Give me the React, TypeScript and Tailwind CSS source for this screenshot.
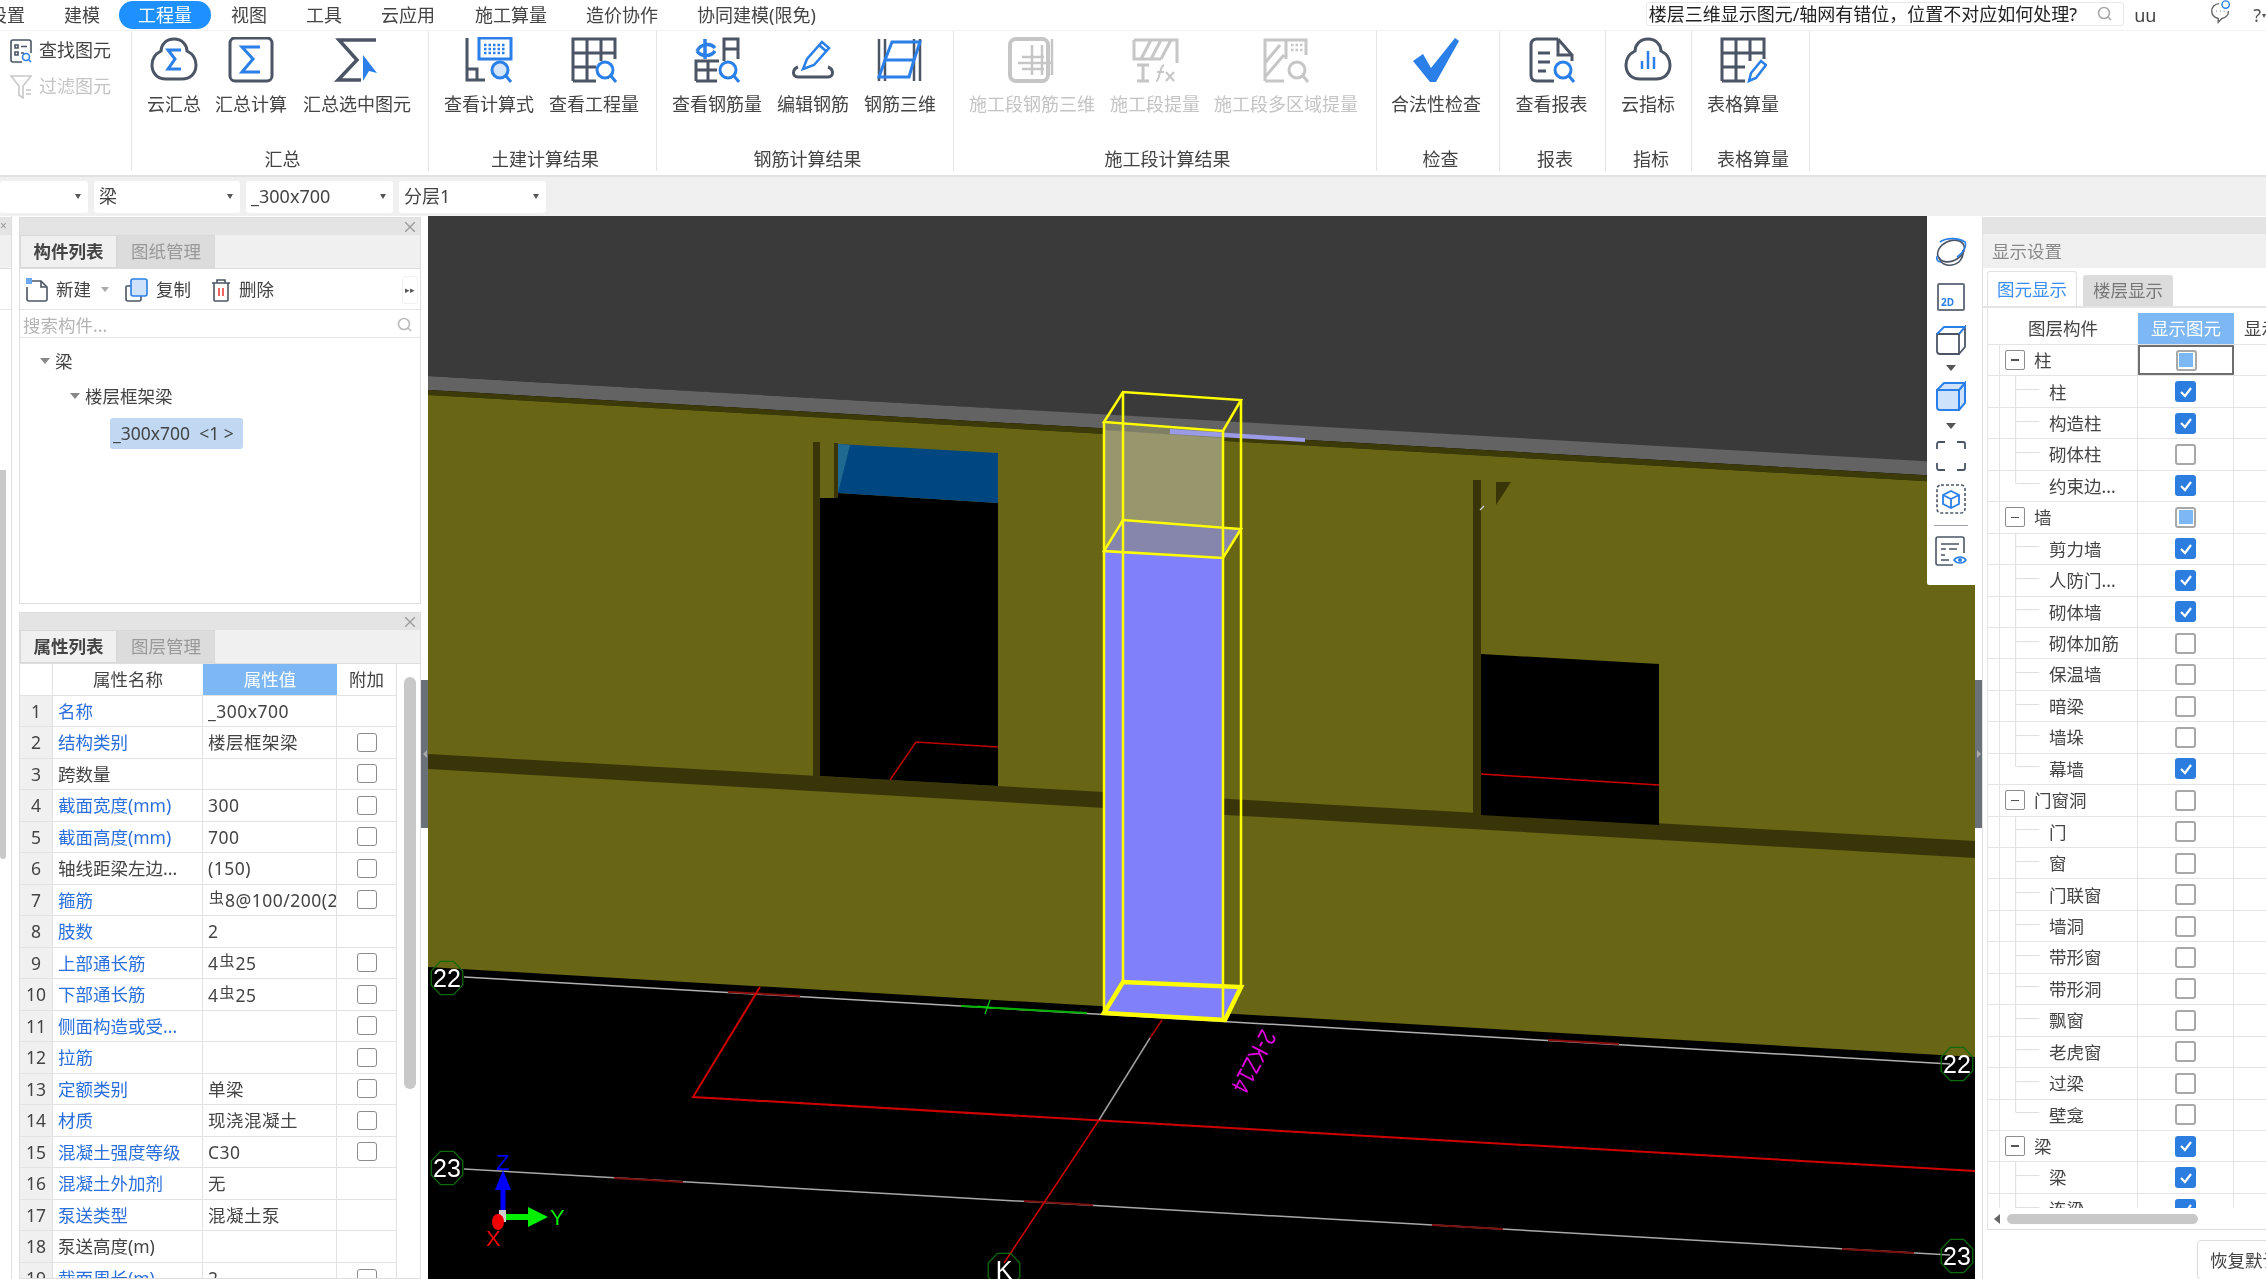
import React from "react";

const G = "#4b5565";
const B = "#2a7fe8";
const L = "#c6c6c6";

function Ic({ children, w = "w-[48px]" }: { children: React.ReactNode; w?: string }) {
  return (
    <svg viewBox="0 0 48 46" className={`${w} h-[46px]`} fill="none" stroke={G} strokeWidth="2.5">
      {children}
    </svg>
  );
}

const Mag = ({ c = B, fill = "none" }: { c?: string; fill?: string }) => (
  <g stroke={c} strokeWidth="3">
    <circle cx="35" cy="33" r="8" fill={fill} />
    <path d="M41 39l5 6" />
  </g>
);

const icons: Record<string, React.ReactNode> = {
  cloudSum: (
    <Ic>
      <path d="M24 2C16 2 11 8 11 14C5 17 2 22 2 28C2 37 8 42 16 42H32C40 42 46 37 46 28C46 22 43 17 37 14C37 8 32 2 24 2Z" strokeWidth="3" />
      <path d="M31 13H18L25 22L18 32H31" stroke={B} strokeWidth="3" />
    </Ic>
  ),
  sum: (
    <Ic>
      <rect x="3" y="1" width="42" height="43" rx="5" strokeWidth="3" />
      <path d="M33 10H15L26 22L15 35H33" stroke={B} strokeWidth="3" />
    </Ic>
  ),
  sumSel: (
    <Ic>
      <path d="M43 3H6L24 23L5 43H28" strokeWidth="3.5" />
      <path d="M30 18L44 36L36 34L30 44Z" fill={B} stroke="none" />
    </Ic>
  ),
  calc: (
    <Ic>
      <path d="M2 1V43H20M2 32H12V43" strokeWidth="3" />
      <rect x="14" y="1" width="32" height="21" stroke={B} strokeWidth="3" />
      <path d="M19 8H41M19 12H41M19 16H41" stroke={B} strokeWidth="2.5" strokeDasharray="2.5 2" />
      <Mag fill="#d4e6fb" />
    </Ic>
  ),
  qty: (
    <Ic>
      <path d="M3 44V2H45V22M17 2V44M31 2V24M3 16H45M3 30H26M3 44H26" strokeWidth="3" />
      <Mag fill="#fff" />
    </Ic>
  ),
  rebarQ: (
    <Ic>
      <path d="M3 44V24H26M3 33H24M3 44H24M15 24V44M31 24V2H45V22M31 12H45" strokeWidth="3" />
      <path d="M4 14C8 6 18 6 22 11M4 14C8 20 18 20 22 14M12 2V22" stroke={B} strokeWidth="3.5" />
      <Mag fill="#fff" />
    </Ic>
  ),
  edit: (
    <Ic>
      <path d="M9 30C3 32 3 40 9 40H39C45 40 45 32 39 30" strokeWidth="3" />
      <path d="M14 32L18 22L33 5L40 11L25 28Z" stroke={B} />
      <path d="M30 8L37 14" stroke={B} />
    </Ic>
  ),
  rebar3d: (
    <Ic>
      <path d="M3 2V44M9 2V44M38 2V44M44 2V44" strokeWidth="2.5" />
      <path d="M9 23L16 5H44L38 23ZM9 23H38L33 40H3Z" stroke={B} strokeWidth="3" />
    </Ic>
  ),
  seg3d: (
    <Ic>
      <rect x="2" y="2" width="38" height="42" rx="6" stroke={L} strokeWidth="4" />
      <path d="M10 26H44M14 20H36M14 32H36M24 8V38M34 8V38M44 2V38" stroke={L} strokeWidth="2.5" />
    </Ic>
  ),
  segQ: (
    <Ic>
      <path d="M3 3H46V26M3 3V22H30M10 22L20 3M20 22L30 3M30 22L40 3M6 28H18M12 28V44M6 44H18" stroke={L} strokeWidth="3" />
      <path d="M25 44C29 44 28 30 33 28M26 35H33M35 35L43 44M43 35L35 44" stroke={L} strokeWidth="2" />
    </Ic>
  ),
  segMulti: (
    <Ic>
      <path d="M3 44V3H44V18M3 44H22M3 26L18 8M3 40L22 18M24 3V22" stroke={L} strokeWidth="3" />
      <path d="M29 8H41M29 13H41" stroke={L} strokeWidth="2.5" strokeDasharray="2.5 2" />
      <Mag c={L} />
    </Ic>
  ),
  check: (
    <Ic>
      <path d="M1 24L11 17L19 31L43 1L47 4L24 45H18Z" fill={B} stroke="none" />
    </Ic>
  ),
  report: (
    <Ic>
      <path d="M30 2H9C5 2 3 4 3 8V38C3 42 5 44 9 44H26M30 2L44 18V24M30 2V18H44" strokeWidth="3" />
      <path d="M10 16H22M10 25H22M10 34H18" strokeWidth="3" />
      <Mag fill="#fff" />
    </Ic>
  ),
  cloudBar: (
    <Ic>
      <path d="M24 2C16 2 11 8 11 14C5 17 2 22 2 28C2 37 8 42 16 42H32C40 42 46 37 46 28C46 22 43 17 37 14C37 8 32 2 24 2Z" strokeWidth="3" />
      <path d="M18 24V32M24 14V32M30 20V32" stroke={B} strokeWidth="2.5" />
    </Ic>
  ),
  tablePen: (
    <Ic>
      <path d="M3 44V2H45V22M17 2V44M31 2V24M3 16H45M3 30H26M3 44H26" strokeWidth="3" />
      <path d="M30 44L32 36L42 24L47 28L37 41Z" stroke={B} />
    </Ic>
  ),
};

type Item = { label: string; icon: string; w: string; off?: boolean };
type Group = { name: string; w: string; row?: string; items: Item[] };

const groups: Group[] = [
  {
    name: "汇总",
    w: "w-[297px]",
    row: "pl-[12px]",
    items: [
      { label: "云汇总", icon: "cloudSum", w: "w-[60px]" },
      { label: "汇总计算", icon: "sum", w: "w-[94px]" },
      { label: "汇总选中图元", icon: "sumSel", w: "w-[118px]" },
    ],
  },
  {
    name: "土建计算结果",
    w: "w-[228px]",
    items: [
      { label: "查看计算式", icon: "calc", w: "w-[120px]" },
      { label: "查看工程量", icon: "qty", w: "w-[90px]" },
    ],
  },
  {
    name: "钢筋计算结果",
    w: "w-[297px]",
    items: [
      { label: "查看钢筋量", icon: "rebarQ", w: "w-[120px]" },
      { label: "编辑钢筋", icon: "edit", w: "w-[72px]" },
      { label: "钢筋三维", icon: "rebar3d", w: "w-[102px]" },
    ],
  },
  {
    name: "施工段计算结果",
    w: "w-[423px]",
    items: [
      { label: "施工段钢筋三维", icon: "seg3d", w: "w-[156px]", off: true },
      { label: "施工段提量", icon: "segQ", w: "w-[90px]", off: true },
      { label: "施工段多区域提量", icon: "segMulti", w: "w-[172px]", off: true },
    ],
  },
  { name: "检查", w: "w-[123px]", items: [{ label: "合法性检查", icon: "check", w: "w-[118px]" }] },
  { name: "报表", w: "w-[106px]", items: [{ label: "查看报表", icon: "report", w: "w-[103px]" }] },
  { name: "指标", w: "w-[86px]", items: [{ label: "云指标", icon: "cloudBar", w: "w-[84px]" }] },
  { name: "表格算量", w: "w-[118px]", items: [{ label: "表格算量", icon: "tablePen", w: "w-[102px]" }] },
];

function Menu() {
  return (
    <div className="h-[30px] flex items-center bg-white text-[18px] text-[#444] shrink-0">
      <div className="w-[25px] overflow-hidden flex justify-end whitespace-nowrap"><span>设置</span></div>
      <span className="ml-[39px] w-[55px] whitespace-nowrap">建模</span>
      <span className="w-[92px] h-[28px] rounded-[14px] bg-[#1e90ff] text-white flex items-center justify-center">工程量</span>
      <span className="ml-[20px] w-[75px]">视图</span>
      <span className="w-[75px]">工具</span>
      <span className="w-[94px]">云应用</span>
      <span className="w-[111px]">施工算量</span>
      <span className="w-[111px]">造价协作</span>
      <span className="whitespace-nowrap">协同建模(限免)</span>
      <div className="flex-1" />
      <div className="w-[478px] h-[24px] mt-[-2px] border border-[#e8e8e8] rounded-[3px] flex items-center overflow-hidden relative">
        <div className="w-[430px] overflow-hidden flex justify-end whitespace-nowrap text-[#222] shrink-0">
          <span>楼层三维显示图元/轴网有错位，位置不对应如何处理?</span>
        </div>
        <svg viewBox="0 0 16 16" className="w-[16px] h-[16px] ml-[20px]" fill="none" stroke="#aaa" strokeWidth="1.6">
          <circle cx="7" cy="7" r="5.5" />
          <path d="M11 11l3 3" />
        </svg>
      </div>
      <span className="ml-[10px] w-[77px] text-[#444]">uu</span>
      <svg viewBox="0 0 24 28" className="w-[24px] h-[26px] -ml-[2px] mt-[-6px]" fill="none" stroke="#666" strokeWidth="1.5">
        <path d="M10 5C5 5 2 9 2 13C2 17 5 20 9 21L9 25L13 21C18 20 20 17 20 13" />
        <circle cx="17" cy="6" r="4" stroke="#2a7fe8" />
        <path d="M7 13h.5M11 13h.5M15 13h.5" strokeWidth="2" />
      </svg>
      <span className="ml-[20px] text-[#555] whitespace-nowrap">?</span>
      <span className="ml-[1px] text-[8px] text-[#555]">▾</span>
    </div>
  );
}

function Ribbon() {
  return (
    <div className="h-[147px] shrink-0 bg-white flex border-b-2 border-[#e2e2e2] border-t border-t-[#f2f2f2]">
      <div className="w-[132px] h-[139px] border-r border-[#e4e4e4] pl-[10px] pt-[6px] flex flex-col gap-[9px]">
        <div className="flex items-center gap-[7px] text-[18px] text-[#444]">
          <svg viewBox="0 0 22 24" className="w-[22px] h-[24px]" fill="none" stroke={G} strokeWidth="1.6">
            <path d="M12 23H3C2 23 1 22 1 21V3C1 2 2 1 3 1H19C20 1 21 2 21 3V14" />
            <path d="M5 6H8V9H5ZM5 13H8V16H5ZM11 7.5H17M11 14H14" />
            <circle cx="16" cy="18" r="3.5" stroke={B} />
            <path d="M19 21l2 2" stroke={B} />
          </svg>
          <span className="whitespace-nowrap">查找图元</span>
        </div>
        <div className="flex items-center gap-[7px] text-[18px] text-[#c4c4c4]">
          <svg viewBox="0 0 22 24" className="w-[22px] h-[24px]" fill="none" stroke="#c8c8c8" strokeWidth="1.6">
            <path d="M1 1H21L13 11V23L9 20V11ZM16 15H21M16 19H21" />
          </svg>
          <span className="whitespace-nowrap">过滤图元</span>
        </div>
      </div>
      {groups.map((g) => (
        <div key={g.name} className={`${g.w} h-[140px] border-r border-[#e4e4e4] flex flex-col justify-between box-border shrink-0`}>
          <div className={`flex pt-[6px] ${g.row ?? ""}`}>
            {g.items.map((it) => (
              <div key={it.label} className={`${it.w} flex flex-col items-center shrink-0`}>
                {icons[it.icon]}
                <span className={`mt-[9px] text-[18px] leading-[24px] whitespace-nowrap ${it.off ? "text-[#c4c4c4]" : "text-[#444]"}`}>
                  {it.label}
                </span>
              </div>
            ))}
          </div>
          <div className="pl-[5px] text-center text-[18px] leading-[24px] text-[#444] whitespace-nowrap">{g.name}</div>
        </div>
      ))}
    </div>
  );
}

function Select({ text, w }: { text: string; w: string }) {
  return (
    <div className={`${w} h-[32px] bg-white rounded-[3px] flex items-center justify-between pl-[5px] pr-[7px] text-[18px] text-[#444] shrink-0`}>
      <span>{text}</span>
      <span className="w-0 h-0 border-x-[3px] border-x-transparent border-t-[5px] border-t-[#555]" />
    </div>
  );
}

function SelectBar() {
  return (
    <div className="h-[39px] shrink-0 bg-[#f0f0f0] flex items-center gap-[6px]">
      <Select text="" w="w-[88px]" />
      <Select text="梁" w="w-[146px]" />
      <Select text="_300x700" w="w-[147px]" />
      <Select text="分层1" w="w-[147px]" />
    </div>
  );
}

const X = () => (
  <svg viewBox="0 0 10 10" className="w-[10px] h-[10px]" stroke="#999" strokeWidth="1.3">
    <path d="M0 0L10 10M10 0L0 10" />
  </svg>
);

function PanelHead({ a, b }: { a: string; b: string }) {
  return (
    <>
      <div className="h-[17px] bg-[#e4e4e4] flex items-center justify-end pr-[5px] shrink-0">
        <X />
      </div>
      <div className="h-[34px] bg-[#f0f0f0] flex text-[17.5px] shrink-0 border-b border-[#dedede]">
        <div className="w-[97px] flex items-center justify-center font-bold text-[#444] border border-[#d8d8d8]">{a}</div>
        <div className="w-[98px] flex items-center justify-center text-[#999] bg-[#dcdcdc] border border-[#d8d8d8]">{b}</div>
      </div>
    </>
  );
}

const props: [string, string, boolean, boolean][] = [
  ["名称", "_300x700", true, false],
  ["结构类别", "楼层框架梁", true, true],
  ["跨数量", "", false, true],
  ["截面宽度(mm)", "300", true, true],
  ["截面高度(mm)", "700", true, true],
  ["轴线距梁左边...", "(150)", false, true],
  ["箍筋", "~8@100/200(2)", true, true],
  ["肢数", "2", true, false],
  ["上部通长筋", "4~25", true, true],
  ["下部通长筋", "4~25", true, true],
  ["侧面构造或受...", "", true, true],
  ["拉筋", "", true, true],
  ["定额类别", "单梁", true, true],
  ["材质", "现浇混凝土", true, true],
  ["混凝土强度等级", "C30", true, true],
  ["混凝土外加剂", "无", true, false],
  ["泵送类型", "混凝土泵", true, false],
  ["泵送高度(m)", "", false, false],
  ["截面周长(m)", "2", true, true],
];

function Val({ v }: { v: string }) {
  if (!v.includes("~")) return <>{v}</>;
  const [l, r] = v.split("~");
  return (
    <>
      {l}
      <span className="text-[15px] align-[4px] mx-[1px] tracking-normal">虫</span>
      {r}
    </>
  );
}

function LeftPanels() {
  return (
    <div className="w-[402px] shrink-0 flex flex-col gap-[8px] pt-[1px]">
      <div className="h-[387px] border border-[#dedede] flex flex-col bg-white shrink-0">
        <PanelHead a="构件列表" b="图纸管理" />
        <div className="h-[41px] pt-[1px] flex items-center pl-[6px] text-[17.5px] text-[#444] border-b border-[#e4e4e4] shrink-0">
          <svg viewBox="0 0 22 24" className="w-[22px] h-[24px]" fill="none" stroke={G} strokeWidth="1.6">
            <path d="M6 3H15L21 9V21C21 22 20 23 19 23H3C2 23 1 22 1 21V9" />
            <path d="M15 3V9H21" />
            <rect x="0" y="0" width="6" height="6" fill="#6aa8f0" stroke="none" />
          </svg>
          <span className="ml-[8px]">新建</span>
          <span className="ml-[10px] w-0 h-0 border-x-[4px] border-x-transparent border-t-[5px] border-t-[#aaa]" />
          <svg viewBox="0 0 23 24" className="w-[23px] h-[24px] ml-[16px]" fill="none" stroke={G} strokeWidth="1.6">
            <path d="M6 8H2C1 8 1 9 1 9V21C1 22 2 23 3 23H14C15 23 16 22 16 21V18" />
            <rect x="6" y="1" width="16" height="17" rx="2" fill="#cfe2fb" stroke={B} />
          </svg>
          <span className="ml-[8px]">复制</span>
          <svg viewBox="0 0 20 24" className="w-[20px] h-[24px] ml-[20px]" fill="none" stroke={G} strokeWidth="1.6">
            <path d="M1 5H19M6 5V2H14V5M3 5V22C3 23 3 23 4 23H16C17 23 17 23 17 22V5" />
            <path d="M8 10V18M12 10V18" stroke="#e8433a" />
          </svg>
          <span className="ml-[8px]">删除</span>
          <div className="flex-1" />
          <div className="w-[16px] h-[28px] rounded-[3px] border border-[#f0f0f0] flex items-center justify-center text-[9px] text-[#555] mr-[2px]">▸▸</div>
        </div>
        <div className="h-[28px] pt-[3px] flex items-center justify-between pl-[3px] pr-[7px] text-[17.5px] text-[#b5b5b5] border-b border-[#e4e4e4] shrink-0">
          <span>搜索构件...</span>
          <svg viewBox="0 0 16 16" className="w-[16px] h-[16px]" fill="none" stroke="#bbb" strokeWidth="1.6">
            <circle cx="7" cy="7" r="5.5" />
            <path d="M11 11l3 3" />
          </svg>
        </div>
        <div className="flex-1 flex flex-col text-[17.5px] text-[#444]">
          <div className="h-[34px] mt-[6px] flex items-center pl-[20px]">
            <span className="w-0 h-0 border-x-[5px] border-x-transparent border-t-[6px] border-t-[#888]" />
            <span className="ml-[5px]">梁</span>
          </div>
          <div className="h-[36px] flex items-center pl-[50px]">
            <span className="w-0 h-0 border-x-[5px] border-x-transparent border-t-[6px] border-t-[#888]" />
            <span className="ml-[5px]">楼层框架梁</span>
          </div>
          <div className="ml-[90px] mt-[4px] w-[133px] h-[31px] bg-[#c0d8f2] rounded-[3px] flex items-center pl-[3px] whitespace-pre">_300x700  &lt;1 &gt;</div>
        </div>
      </div>
      <div className="flex-1 border border-[#dedede] flex flex-col bg-white overflow-hidden">
        <PanelHead a="属性列表" b="图层管理" />
        <div className="relative flex-1 overflow-hidden text-[17.5px] text-[#444]">
          <div className="h-[30.5px] flex items-stretch">
            <div className="w-[33px] border-r border-[#e2e2e2]" />
            <div className="w-[150px] flex items-center justify-center">属性名称</div>
            <div className="w-[134px] flex items-center justify-center bg-[#7db7f4] text-white">属性值</div>
            <div className="w-[60px] flex items-center justify-center border-r border-[#e2e2e2]">附加</div>
          </div>
          {props.map(([n, v, blue, cb], i) => (
            <div key={n} className="h-[31.52px] flex items-stretch border-t border-[#e2e2e2] w-[377px]">
              <div className="w-[33px] bg-[#f0f0f0] border-r border-[#e2e2e2] flex items-center justify-center shrink-0">{i + 1}</div>
              <div className={`w-[150px] pl-[5px] border-r border-[#e2e2e2] flex items-center whitespace-nowrap shrink-0 ${blue ? "text-[#2b6fdc]" : ""}`}>{n}</div>
              <div className="w-[134px] pl-[5px] border-r border-[#e2e2e2] overflow-hidden whitespace-nowrap flex items-center shrink-0 tracking-[0.5px]">
                <span><Val v={v} /></span>
              </div>
              <div className="w-[60px] border-r border-[#e2e2e2] flex items-center justify-center shrink-0">
                {cb && <span className="w-[20px] h-[19px] rounded-[3px] border border-[#8c8c8c] bg-white" />}
              </div>
            </div>
          ))}
          <div className="absolute left-[384px] top-[13px] w-[12px] h-[412px] rounded-[6px] bg-[#c8c8c8]" />
        </div>
      </div>
    </div>
  );
}

function Hex({ x, y, t }: { x: number; y: number; t: string }) {
  const r = 18;
  const pts = Array.from({ length: 8 }, (_, i) => {
    const a = (Math.PI / 4) * i + Math.PI / 8;
    return `${x + r * 0.95 * Math.cos(a)},${y + r * Math.sin(a)}`;
  }).join(" ");
  return (
    <g>
      <polygon points={pts} fill="none" stroke="#0d6b0d" strokeWidth="1.3" />
      <text x={x} y={y + 9} fill="#fff" fontSize="25" fontFamily="Liberation Sans, sans-serif" textAnchor="middle">{t}</text>
    </g>
  );
}

function Scene() {
  return (
    <svg viewBox="428 216 1547 1063" className="w-full h-full block">
      <rect x="428" y="216" width="1547" height="1063" fill="#000" />
      <polygon points="428,216 1975,216 1975,465 428,376" fill="#3a3a3a" />
      <polygon points="428,376 1975,464 1975,478 428,390" fill="#636363" />
      <polygon points="428,390 1975,478 1975,484 428,395" fill="#3d3a0a" />
      <polygon points="428,395 1975,484 1975,1057 428,967" fill="#686614" />
      <polygon points="428,754 1975,841 1975,858 428,769" fill="#3a3509" />

      {/* first opening */}
      <rect x="813" y="442" width="7" height="334" fill="#3a3509" />
      <polygon points="820,498 834,498 838,493 998,503 998,786 820,776" fill="#000" />
      <rect x="834" y="443" width="4" height="55" fill="#3a3509" />
      <polygon points="838,444 998,453 998,503 838,493" fill="#004680" />
      <polygon points="838,444 850,445 838,493" fill="#1f6a90" />
      <polyline points="890,780 916,742 998,747" fill="none" stroke="#c00000" strokeWidth="1.5" />

      {/* second opening */}
      <rect x="1473" y="480" width="8" height="335" fill="#3a3509" />
      <polygon points="1496,482 1511,482 1496,505" fill="#3a3509" />
      <path d="M1480 510l4 -4" stroke="#cccccc" strokeWidth="1.2" />
      <polygon points="1481,654 1659,664 1659,825 1481,815" fill="#000" />
      <line x1="1481" y1="774" x2="1659" y2="785" stroke="#d00000" strokeWidth="1.5" />

      {/* grid */}
      <line x1="464" y1="977" x2="1950" y2="1064" stroke="#b0b0b0" strokeWidth="1.5" />
      <line x1="728" y1="992" x2="800" y2="996" stroke="#8a0d0d" strokeWidth="2" />
      <line x1="961" y1="1006" x2="1087" y2="1013" stroke="#00b000" strokeWidth="2" />
      <path d="M990 1000l-5 14M978 1006l14 2" stroke="#00d000" strokeWidth="1.2" />
      <line x1="1548" y1="1040" x2="1619" y2="1044" stroke="#8a0d0d" strokeWidth="2" />
      <line x1="464" y1="1169" x2="1950" y2="1255" stroke="#a8a8a8" strokeWidth="1.5" />
      <line x1="614" y1="1178" x2="683" y2="1182" stroke="#7a0d0d" strokeWidth="2" />
      <line x1="1024" y1="1201" x2="1093" y2="1205" stroke="#7a0d0d" strokeWidth="2" />
      <line x1="1432" y1="1225" x2="1503" y2="1229" stroke="#7a0d0d" strokeWidth="2" />
      <line x1="1842" y1="1249" x2="1914" y2="1253" stroke="#7a0d0d" strokeWidth="2" />
      <polyline points="760,987 693,1097 1975,1171" fill="none" stroke="#d00000" strokeWidth="2" />
      <line x1="1162" y1="1020" x2="1150" y2="1038" stroke="#b00000" strokeWidth="1.5" />
      <line x1="1150" y1="1038" x2="1099" y2="1120" stroke="#a0a0a0" strokeWidth="1.5" />
      <line x1="1099" y1="1120" x2="1004" y2="1263" stroke="#d00000" strokeWidth="1.5" />

      <text transform="translate(1262 1028) rotate(118) scale(0.85 1.05)" fill="#e000e0" fontSize="24" fontFamily="Liberation Sans, sans-serif">2-KZ14</text>

      {/* column */}
      <polygon points="1104,551 1223,558 1223,1020 1104,1013" fill="#8080fa" />
      <polygon points="1104,1013 1123,982 1241,987 1225,1020" fill="#8080fa" />
      <polygon points="1104,422 1223,431 1223,558 1104,551" fill="#97966c" />
      <polygon points="1104,422 1223,431 1223,438 1104,430" fill="#7f7f66" />
      <polygon points="1170,429 1305,438 1305,442 1170,434" fill="#9a9ae6" />
      <polygon points="1104,551 1123,520 1241,529 1223,558" fill="#8686ac" />
      <g fill="none" stroke="#ffff00" strokeWidth="2.5">
        <polygon points="1104,422 1123,392 1241,400 1223,431" />
        <polygon points="1104,551 1123,520 1241,529 1223,558" />
        <line x1="1104" y1="422" x2="1104" y2="1013" />
        <line x1="1123" y1="392" x2="1123" y2="982" />
        <line x1="1241" y1="400" x2="1241" y2="987" />
        <line x1="1223" y1="431" x2="1223" y2="1020" />
      </g>
      <polygon points="1104,1013 1123,982 1241,987 1225,1020" fill="none" stroke="#ffff00" strokeWidth="4.5" />

      <Hex x={447} y={978} t="22" />
      <Hex x={447} y={1168} t="23" />
      <Hex x={1957} y={1064} t="22" />
      <Hex x={1957} y={1256} t="23" />
      <Hex x={1004} y={1270} t="K" />

      {/* gizmo */}
      <line x1="503" y1="1212" x2="503" y2="1182" stroke="#0000ff" strokeWidth="5" />
      <polygon points="503,1170 511,1190 495,1190" fill="#0000ff" />
      <text x="496" y="1170" fill="#0000ff" fontSize="22" fontFamily="Liberation Sans, sans-serif">Z</text>
      <line x1="505" y1="1217" x2="530" y2="1217" stroke="#00f000" strokeWidth="6" />
      <polygon points="548,1217 528,1207 528,1227" fill="#00f000" />
      <text x="550" y="1225" fill="#00f000" fontSize="22" fontFamily="Liberation Sans, sans-serif">Y</text>
      <rect x="499" y="1210" width="7" height="12" fill="#cccccc" />
      <ellipse cx="498" cy="1222" rx="6" ry="8" fill="#f00000" />
      <text x="486" y="1246" fill="#f00000" fontSize="22" fontFamily="Liberation Sans, sans-serif">X</text>
    </svg>
  );
}

function FloatBar() {
  const Caret = () => <span className="block w-0 h-0 border-x-[5px] border-x-transparent border-t-[6px] border-t-[#555]" />;
  return (
    <div className="absolute right-0 top-0 w-[48px] h-[369px] bg-white flex flex-col items-center pt-[21px] rounded-bl-[2px]">
      <svg viewBox="0 0 32 30" className="w-[32px] h-[30px]" fill="none" stroke={G} strokeWidth="1.6">
        <path d="M4 20C5 27 12 29 17 28C24 27 29 21 28 13" />
        <ellipse cx="16" cy="14" rx="14" ry="10" transform="rotate(-25 16 14)" />
        <path d="M5 5C12 0 24 1 30 5C32 10 28 16 22 20" stroke={B} />
        <path d="M2 19C1 23 3 25 6 25" stroke={B} />
      </svg>
      <div className="mt-[16px] w-[28px] h-[28px] border-2 border-[#6b7280] rounded-[2px] flex items-end pl-[2px] text-[10px] leading-[14px] font-bold text-[#2a7fe8]">2D</div>
      <svg viewBox="0 0 30 30" className="w-[30px] h-[30px] mt-[14px]" fill="none" stroke={G} strokeWidth="1.8">
        <path d="M1 9H23V29H4C2 29 1 28 1 26Z" />
        <path d="M23 9L29 2V22L23 29" />
        <path d="M1 9L8 2H29L23 9" stroke={B} />
      </svg>
      <div className="mt-[10px] h-[6px]"><Caret /></div>
      <svg viewBox="0 0 30 30" className="w-[30px] h-[30px] mt-[10px]" fill="#cfe2fb" stroke={B} strokeWidth="2">
        <path d="M1 9H23V29H4C2 29 1 28 1 26Z" />
        <path d="M23 9L29 2V22L23 29Z" />
        <path d="M1 9L8 2H29L23 9Z" />
      </svg>
      <div className="mt-[12px] h-[6px]"><Caret /></div>
      <svg viewBox="0 0 30 30" className="w-[30px] h-[30px] mt-[12px]" fill="none" stroke={G} strokeWidth="1.8">
        <path d="M1 8V3C1 2 2 1 3 1H9M21 1H27C28 1 29 2 29 3V8M29 22V27C29 28 28 29 27 29H21M9 29H3C2 29 1 28 1 27V22" />
      </svg>
      <svg viewBox="0 0 30 30" className="w-[30px] h-[30px] mt-[13px]" fill="none" stroke={G} strokeWidth="1.6">
        <rect x="1" y="1" width="28" height="28" rx="4" strokeDasharray="3 2" />
        <path d="M15 7L23 11V20L15 24L7 20V11ZM7 11L15 15L23 11M15 15V24" stroke={B} strokeWidth="1.8" />
      </svg>
      <div className="mt-[11px] w-[34px] h-[1px] bg-[#9ca3af]" />
      <svg viewBox="0 0 32 30" className="w-[32px] h-[30px] mt-[10px]" fill="none" stroke={G} strokeWidth="1.6">
        <path d="M18 29H3C2 29 1 28 1 27V3C1 2 2 1 3 1H27C28 1 29 2 29 3V17" />
        <path d="M6 8H24M6 13H11M14 13H22M6 19H10M6 24H14" />
        <path d="M19 24C22 20 28 20 31 24C28 28 22 28 19 24Z" stroke={B} />
        <circle cx="25" cy="24" r="2" fill={B} stroke="none" />
      </svg>
    </div>
  );
}

type Row = { t: string; kind: "p" | "c" | "l"; s: "on" | "off" | "part" };
const rows: Row[] = [
  { t: "柱", kind: "p", s: "part" },
  { t: "柱", kind: "c", s: "on" },
  { t: "构造柱", kind: "c", s: "on" },
  { t: "砌体柱", kind: "c", s: "off" },
  { t: "约束边...", kind: "l", s: "on" },
  { t: "墙", kind: "p", s: "part" },
  { t: "剪力墙", kind: "c", s: "on" },
  { t: "人防门...", kind: "c", s: "on" },
  { t: "砌体墙", kind: "c", s: "on" },
  { t: "砌体加筋", kind: "c", s: "off" },
  { t: "保温墙", kind: "c", s: "off" },
  { t: "暗梁", kind: "c", s: "off" },
  { t: "墙垛", kind: "c", s: "off" },
  { t: "幕墙", kind: "l", s: "on" },
  { t: "门窗洞", kind: "p", s: "off" },
  { t: "门", kind: "c", s: "off" },
  { t: "窗", kind: "c", s: "off" },
  { t: "门联窗", kind: "c", s: "off" },
  { t: "墙洞", kind: "c", s: "off" },
  { t: "带形窗", kind: "c", s: "off" },
  { t: "带形洞", kind: "c", s: "off" },
  { t: "飘窗", kind: "c", s: "off" },
  { t: "老虎窗", kind: "c", s: "off" },
  { t: "过梁", kind: "c", s: "off" },
  { t: "壁龛", kind: "l", s: "off" },
  { t: "梁", kind: "p", s: "on" },
  { t: "梁", kind: "c", s: "on" },
  { t: "连梁", kind: "c", s: "on" },
];

function Cb({ s }: { s: Row["s"] }) {
  if (s === "on")
    return (
      <span className="w-[21px] h-[21px] rounded-[3px] bg-[#2b7de0] flex items-center justify-center">
        <svg viewBox="0 0 14 14" className="w-[14px] h-[14px]" fill="none" stroke="#fff" strokeWidth="2.2">
          <path d="M2 7L6 11L12 3" />
        </svg>
      </span>
    );
  if (s === "part")
    return (
      <span className="w-[21px] h-[21px] rounded-[3px] border-2 border-[#a8a8a8] bg-white flex items-center justify-center">
        <span className="w-[14px] h-[14px] bg-[#7db7f4]" />
      </span>
    );
  return <span className="w-[21px] h-[21px] rounded-[3px] border-2 border-[#a8a8a8] bg-white" />;
}

function RightPanel() {
  return (
    <div className="w-[284px] shrink-0 flex flex-col bg-white border-l border-[#e0e0e0] overflow-hidden pt-[1px]">
      <div className="h-[17px] bg-[#e4e4e4] shrink-0" />
      <div className="h-[34px] bg-[#f0f0f0] flex items-center pl-[9px] text-[17.5px] text-[#8a8a8a] shrink-0">显示设置</div>
      <div className="h-[40px] shrink-0 flex items-end pl-[4px] gap-[6px] text-[17.5px] border-b-2 border-[#e4e4e4]">
        <div className="w-[90px] h-[35px] border border-b-0 border-[#e0e0e0] rounded-t-[3px] flex items-center justify-center text-[#3b8ff0]">图元显示</div>
        <div className="w-[90px] h-[31px] bg-[#dcdcdc] rounded-t-[3px] flex items-center justify-center text-[#777]">楼层显示</div>
      </div>
      <div className="h-[900px] shrink-0 ml-[4px] pt-[5px] text-[17.5px] text-[#444] overflow-hidden border-l border-[#e4e4e4]">
        <div className="h-[31px] flex">
          <div className="w-[150px] flex items-center justify-center shrink-0">图层构件</div>
          <div className="w-[96px] flex items-center justify-center bg-[#7db7f4] text-white shrink-0">显示图元</div>
          <div className="pl-[10px] flex items-center whitespace-nowrap shrink-0">显示标注</div>
        </div>
        {rows.map((r, i) => (
          <div key={i} className="h-[31.45px] flex items-stretch border-t border-[#e4e4e4]">
            <div className="w-[12px] border-r border-[#e4e4e4] shrink-0" />
            <div className="w-[138px] flex items-center border-r border-[#e4e4e4] shrink-0">
              {r.kind === "p" ? (
                <>
                  <span className="ml-[5px] w-[20px] h-[20px] rounded-[2px] border border-[#8c8c8c] flex items-center justify-center">
                    <span className="w-[8px] h-[1.5px] bg-[#555]" />
                  </span>
                  <span className="ml-[9px]">{r.t}</span>
                </>
              ) : (
                <>
                  <svg viewBox="0 0 40 32" className="w-[40px] h-[31px] shrink-0" fill="none" stroke="#dcdcdc" strokeWidth="1">
                    <path d={r.kind === "c" ? "M15.5 0V32M16 14H40" : "M15.5 0V14M16 14H40"} />
                  </svg>
                  <span className="ml-[9px] whitespace-nowrap">{r.t}</span>
                </>
              )}
            </div>
            <div className={`w-[96px] flex items-center justify-center shrink-0 ${i === 0 ? "border-2 border-[#6e6e6e]" : "border-r border-[#e4e4e4]"}`}>
              <Cb s={r.s} />
            </div>
          </div>
        ))}
      </div>
      <div className="h-[22px] shrink-0 ml-[4px] flex items-center border-b border-[#e0e0e0] border-l border-l-[#e4e4e4] bg-white relative">
        <span className="ml-[6px] w-0 h-0 border-y-[5px] border-y-transparent border-r-[6px] border-r-[#666]" />
        <span className="ml-[7px] w-[191px] h-[10px] rounded-[5px] bg-[#c8c8c8]" />
      </div>
      <div className="flex justify-start pl-[214px] pt-[10px]">
        <div className="w-[90px] h-[40px] shrink-0 border border-[#dcdcdc] rounded-[4px] pl-[12px] flex items-center text-[17.5px] text-[#444] whitespace-nowrap">恢复默认设置</div>
      </div>
    </div>
  );
}

export default function App() {
  return (
    <div className="w-[2266px] h-[1279px] overflow-hidden flex flex-col bg-white font-['Noto_Sans','Noto_Sans_CJK_SC',sans-serif] blur-[0.5px]">
      <Menu />
      <Ribbon />
      <SelectBar />
      <div className="flex-1 flex min-h-0">
        <div className="w-[19px] shrink-0 flex">
          <div className="w-[12px] bg-white border-r border-[#dedede] flex flex-col">
            <div className="h-[18px] mt-[1px] bg-[#e4e4e4] flex items-center">
              <span className="text-[12px] text-[#999] leading-none">×</span>
            </div>
            <div className="h-[34px] bg-[#f0f0f0] border-b border-[#dedede]" />
            <div className="h-[41px] border-b border-[#e4e4e4]" />
            <div className="w-[6px] h-[389px] mt-[160px] bg-[#c8c8c8] rounded-b-[4px]" />
          </div>
        </div>
        <LeftPanels />
        <div className="w-[7px] shrink-0 flex flex-col bg-white">
          <div className="w-[7px] h-[148px] mt-[464px] bg-[#6b7178] flex items-center justify-center">
            <span className="w-0 h-0 border-y-[4px] border-y-transparent border-r-[4px] border-r-[#aaa]" />
          </div>
        </div>
        <div className="w-[1547px] shrink-0 relative">
          <Scene />
          <FloatBar />
        </div>
        <div className="w-[7px] shrink-0 bg-white flex flex-col">
          <div className="w-[7px] h-[148px] mt-[464px] bg-[#6b7178] flex items-center justify-center">
            <span className="w-0 h-0 border-y-[4px] border-y-transparent border-l-[4px] border-l-[#aaa]" />
          </div>
        </div>
        <RightPanel />
      </div>
    </div>
  );
}
